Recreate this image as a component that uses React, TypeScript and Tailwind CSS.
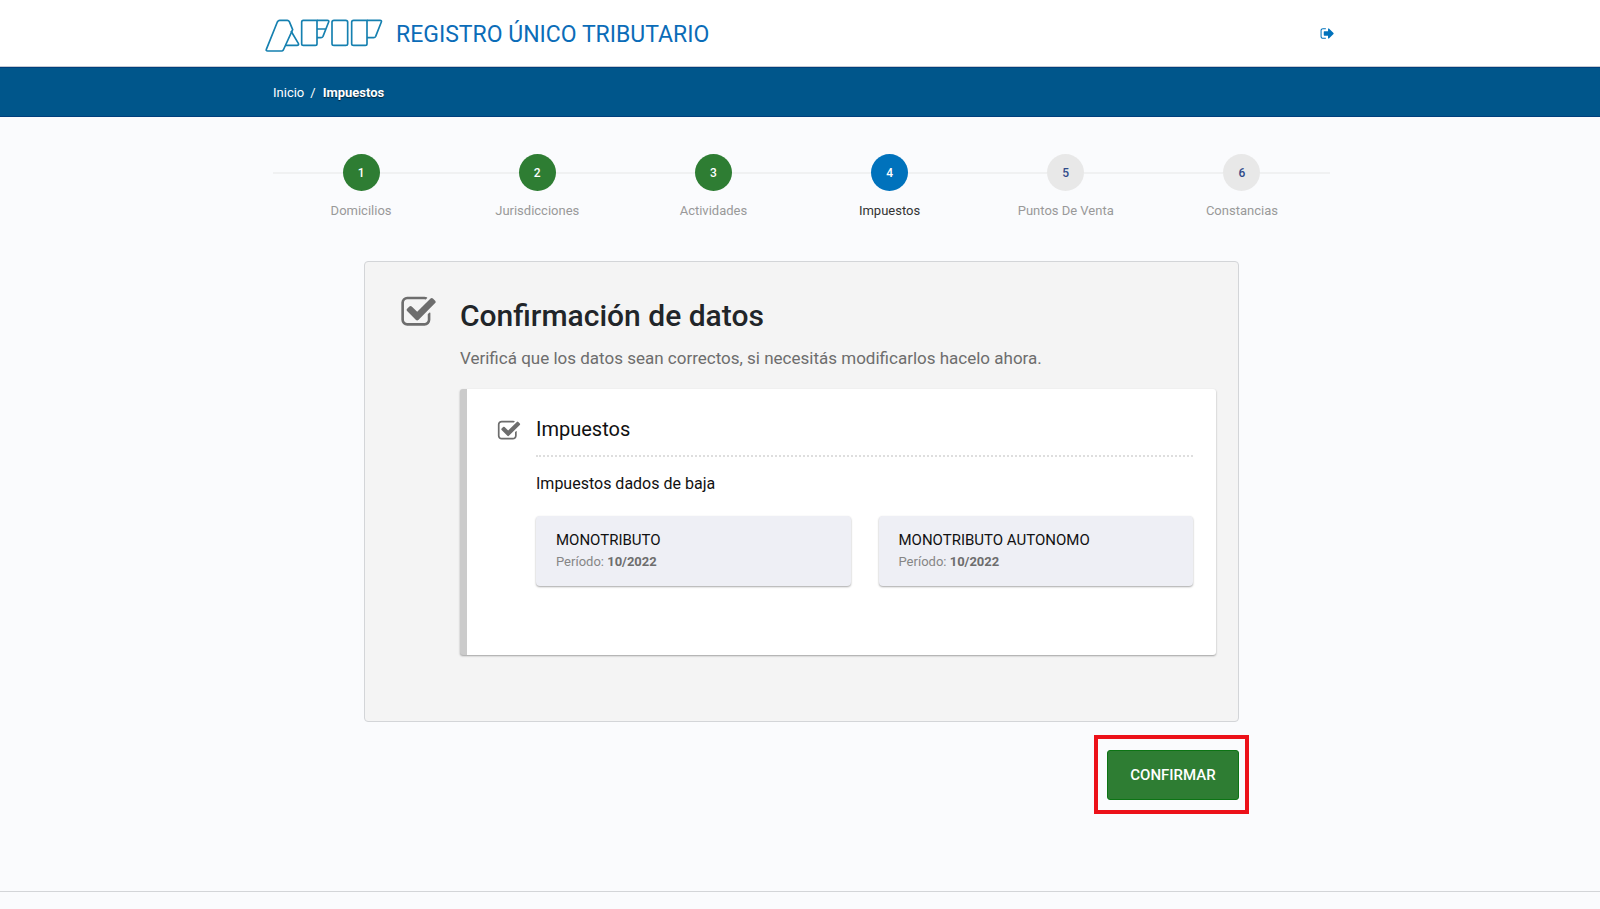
import React from "react";

type StepStatus = "done" | "current" | "pending";

type Step = {
  label: string;
  status: StepStatus;
};

type Tax = {
  name: string;
  period: string;
};

const steps: Step[] = [
  { label: "Domicilios", status: "done" },
  { label: "Jurisdicciones", status: "done" },
  { label: "Actividades", status: "done" },
  { label: "Impuestos", status: "current" },
  { label: "Puntos De Venta", status: "pending" },
  { label: "Constancias", status: "pending" },
];

const taxes: Tax[] = [
  { name: "MONOTRIBUTO", period: "10/2022" },
  { name: "MONOTRIBUTO AUTONOMO", period: "10/2022" },
];

const circleStyles: Record<StepStatus, string> = {
  done: "bg-[#2e7d33] text-white",
  current: "bg-[#0072bc] text-white",
  pending: "bg-[#e8e8e8] text-[#2f4b8a]",
};

const AfipLogo: React.FC = () => (
  <svg
    viewBox="29 28 354 99"
    className="h-[33px] w-[118px]"
    fill="none"
    stroke="#1580b0"
    strokeWidth="5"
    strokeLinejoin="round"
    role="img"
    aria-label="AFIP"
  >
    <path d="M73 32H96Q100 32 102 36L112 60L84 121Q82 124 79 124H37Q31 124 33 119L66 37Q69 32 73 32Z" />
    <path d="M107 64L129 101Q132 107 125 107H90" />
    <path d="M144 32H185V102Q185 107 180 107H144Q139 107 139 102V37Q139 32 144 32Z" />
    <path d="M185 32H216Q222 32 220 37L203 80Q201 84 197 84H185M185 58H211" />
    <path d="M236 32H271Q277 32 277 37V102Q277 107 271 107H236Q230 107 230 102V37Q230 32 236 32Z" />
    <path d="M295 32H335V102Q335 107 330 107H295Q289 107 289 102V37Q289 32 295 32Z" />
    <path d="M335 32H374Q380 32 378 37L361 80Q359 84 355 84H335" />
  </svg>
);

const CheckIcon: React.FC<{ className: string }> = ({ className }) => (
  <svg viewBox="0 0 1792 1792" className={className} fill="currentColor" aria-hidden="true">
    <path d="M1472 930v318q0 119-84.5 203.5t-203.5 84.5h-832q-119 0-203.5-84.5t-84.5-203.5v-832q0-119 84.5-203.5t203.5-84.5h832q63 0 117 25 15 7 18 23 3 17-9 29l-49 49q-10 10-23 10-3 0-9-2-23-6-45-6h-832q-66 0-113 47t-47 113v832q0 66 47 113t113 47h832q66 0 113-47t47-113v-254q0-13 9-22l64-64q10-10 23-10 6 0 12 3 20 8 20 29zm231-489l-814 814q-24 24-57 24t-57-24l-430-430q-24-24-24-57t24-57l110-110q24-24 57-24t57 24l263 263 647-647q24-24 57-24t57 24l110 110q24 24 24 57t-24 57z" />
  </svg>
);

const SignOutIcon: React.FC = () => (
  <svg viewBox="0 0 1792 1792" className="size-[15px]" fill="currentColor" aria-hidden="true">
    <path d="M704 1440q0 4 1 20t.5 26.5-3 23.5-10 19.5-20.5 6.5h-320q-119 0-203.5-84.5t-84.5-203.5v-704q0-119 84.5-203.5t203.5-84.5h320q13 0 22.5 9.5t9.5 22.5q0 4 1 20t.5 26.5-3 23.5-10 19.5-20.5 6.5h-320q-66 0-113 47t-47 113v704q0 66 47 113t113 47h312l11.5 1 11.5 3 8 5.5 7 9 2 13.5zm928-544q0 26-19 45l-544 544q-19 19-45 19t-45-19-19-45v-288h-448q-26 0-45-19t-19-45v-384q0-26 19-45t45-19h448v-288q0-26 19-45t45-19 45 19l544 544q19 19 19 45z" />
  </svg>
);

const App: React.FC = () => {
  return (
    <div className="flex min-h-screen flex-col bg-[#fafbfd] font-['Roboto',sans-serif] text-[#111]">
      <header className="border-b border-[#c5cbd3] bg-white">
        <div className="mx-auto flex h-[66px] max-w-[1070px] items-center justify-between">
          <div className="flex items-center gap-[13px] pt-1">
            <AfipLogo />
            <h1 className="text-[23px] leading-8 text-[#0b6cb8]">REGISTRO ÚNICO TRIBUTARIO</h1>
          </div>
          <a href="#salir" aria-label="Salir" className="text-[#0072bc]">
            <SignOutIcon />
          </a>
        </div>
      </header>

      <nav aria-label="Ruta" className="border-y border-[#003f7d] bg-[#00568b]">
        <ol className="mx-auto flex h-12 max-w-[1056px] items-center pt-[2px] text-[13px] text-white">
          <li className="pl-px">
            <a href="#inicio">Inicio</a>
            <span className="px-[6px]">/</span>
          </li>
          <li className="pl-px font-bold [text-shadow:0_1px_1px_rgba(0,0,0,0.6)]" aria-current="page">
            Impuestos
          </li>
        </ol>
      </nav>

      <main className="mx-auto w-full max-w-[1088px] flex-1 pt-[37px] pr-[14px] pl-[17px]">
        <ol className="grid grid-cols-6">
          {steps.map((step, i) => (
            <li key={step.label} className="flex flex-col items-center gap-[10px]">
              <div className="flex w-full items-center">
                <span className="h-[2px] flex-1 bg-[#f0f1f2]" />
                <span
                  className={`flex size-[37px] items-center justify-center rounded-full text-xs font-medium ${circleStyles[step.status]}`}
                >
                  {i + 1}
                </span>
                <span className="h-[2px] flex-1 bg-[#f0f1f2]" />
              </div>
              <span
                className={`text-[13px] leading-5 ${step.status === "current" ? "text-[#333]" : "text-[#999]"}`}
              >
                {step.label}
              </span>
            </li>
          ))}
        </ol>

        <div className="mx-[91px] mt-10">
          <section className="flex rounded border border-[#d3d5d8] bg-[#f4f4f4] pt-8 pr-[22px] pb-[66px] pl-[35px] text-[#6d6d6d]">
            <CheckIcon className="size-[37px] shrink-0" />
            <div className="ml-[23px] flex-1">
              <h2 className="text-[30px] leading-[44px] font-medium text-[#212529]">Confirmación de datos</h2>
              <p className="mt-2 text-[17px] leading-6">
                Verificá que los datos sean correctos, si necesitás modificarlos hacelo ahora.
              </p>

              <div className="mt-[19px] flex rounded-[3px] border-l-[7px] border-[#cbcbcb] bg-white pt-[26px] pr-[23px] pb-[69px] pl-[30px] shadow-[0_1px_2px_rgba(0,0,0,0.35)]">
                <CheckIcon className="mt-1 size-6 shrink-0" />
                <div className="ml-[15px] flex-1">
                  <h3 className="border-b-2 border-dotted border-[#dedede] pb-3 text-xl leading-7 text-[#111]">
                    Impuestos
                  </h3>
                  <h4 className="mt-[15px] text-base leading-6 text-[#111]">Impuestos dados de baja</h4>
                  <ul className="mt-5 grid grid-cols-2 gap-7">
                    {taxes.map((tax) => (
                      <li
                        key={tax.name}
                        className="rounded bg-[#eeeff5] px-5 pt-[14px] pb-[14px] shadow-[0_1px_2px_rgba(0,0,0,0.35)]"
                      >
                        <p className="text-[15px] leading-5 text-[#111]">{tax.name}</p>
                        <p className="mt-[2px] text-[13px] leading-5 text-[#868686]">
                          Período: <b className="font-bold text-[#6d6d6d]">{tax.period}</b>
                        </p>
                      </li>
                    ))}
                  </ul>
                </div>
              </div>
            </div>
          </section>

          <div className="-mr-[10px] mt-[13px] flex justify-end">
            <div className="border-4 border-[#ec1119] pt-[11px] pr-[6px] pb-[10px] pl-[9px]">
              <button
                type="button"
                className="h-[50px] w-[132px] rounded-[3px] border border-[#0c7414] bg-[#2e7d33] text-[15px] font-medium text-white"
              >
                CONFIRMAR
              </button>
            </div>
          </div>
        </div>
      </main>

      <footer className="h-[18px] border-t border-[#d3d5d8]" />
    </div>
  );
};

export default App;
